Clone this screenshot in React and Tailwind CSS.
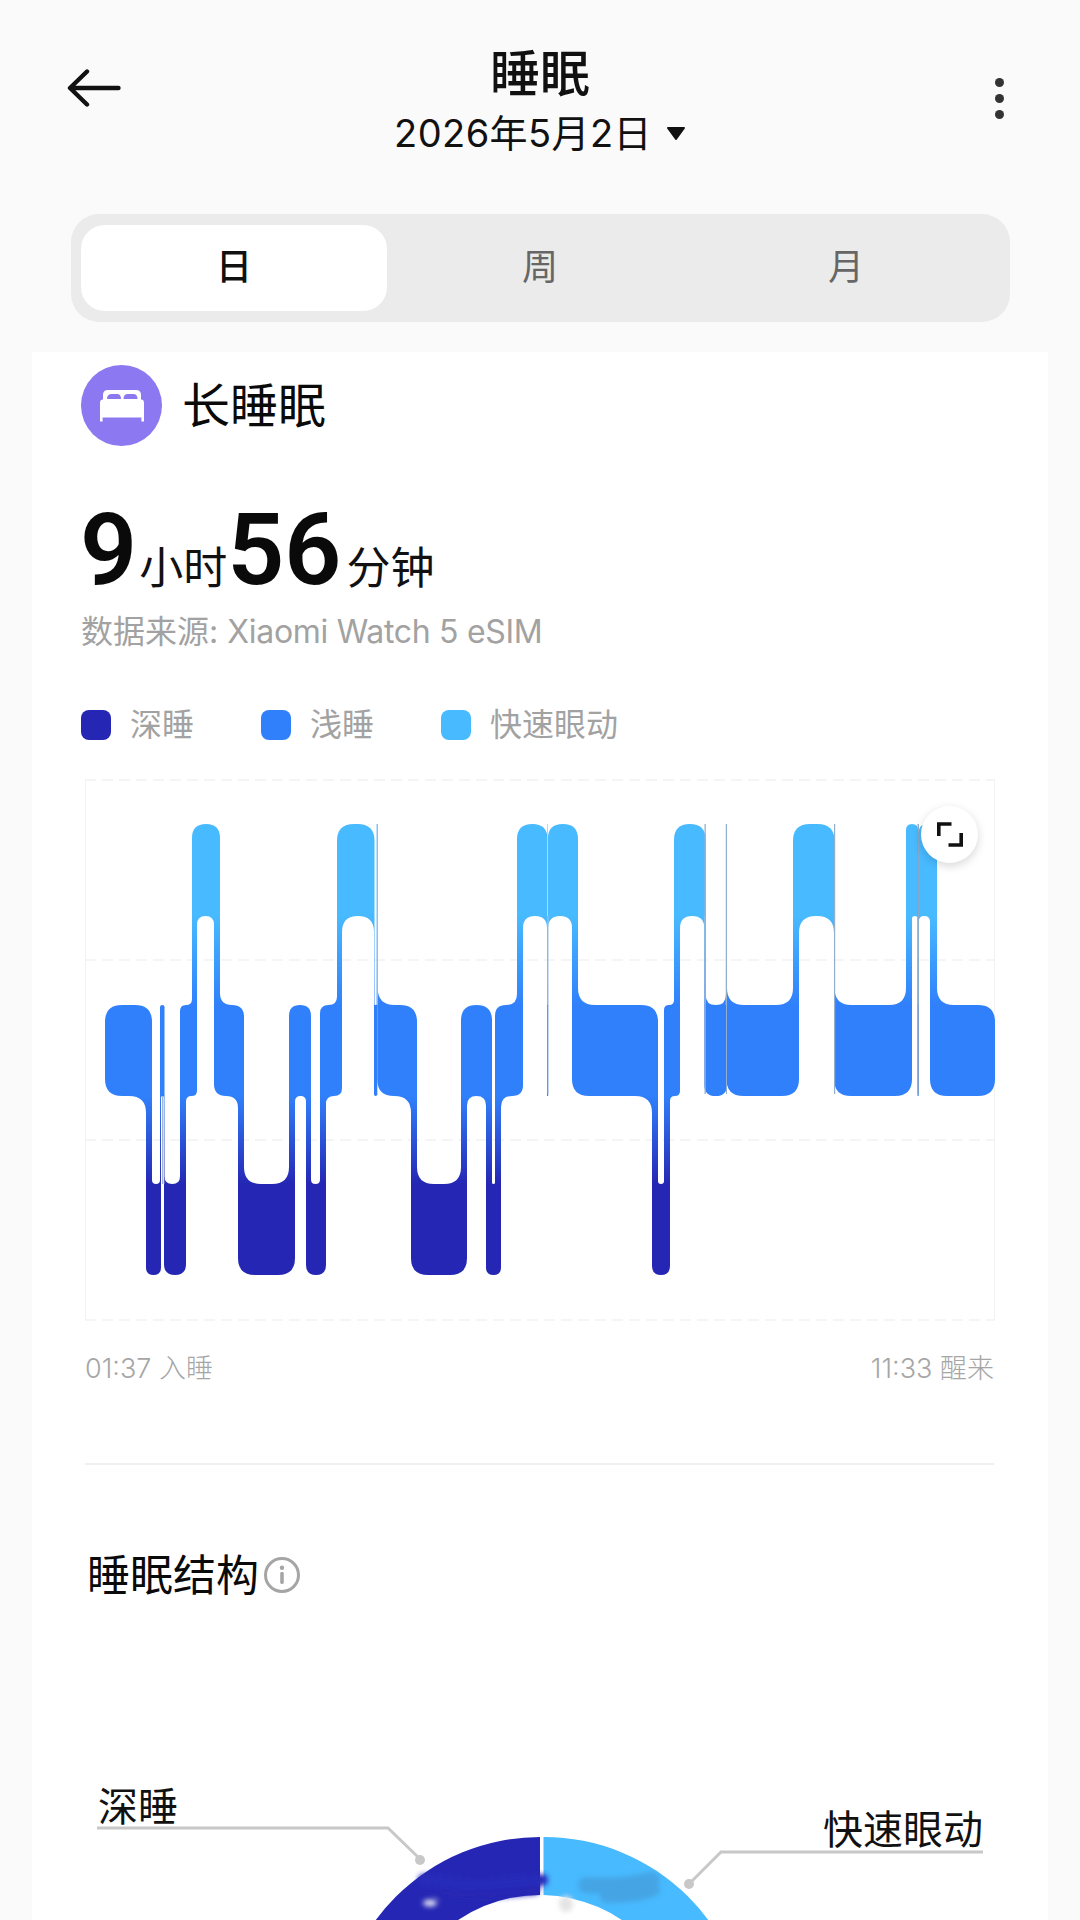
import React from "react";

const TOP = [824, 1005, 1184];
const BOT = [916, 1096, 1275];
const COL = ["#48BAFF", "#3080FB", "#2527B4"];
const R = 17;
const SEG = [
  [105, 152, 1], [146, 161, 2], [160, 164.5, 1], [164, 186, 2], [180, 197, 1], [192, 220, 0],
  [214, 244, 1], [238, 295, 2], [289, 311, 1], [306, 326, 2], [320, 342, 1], [337, 374.5, 0],
  [374, 377.3, 1], [376.7, 377.7, 0], [377.3, 417, 1], [411, 467, 2], [461, 492, 1], [486, 501, 2],
  [495, 523, 1], [517, 547.5, 0], [547, 548.2, 1], [547.8, 578, 0], [572, 658, 1], [652, 670, 2],
  [664, 680, 1], [674, 705.7, 0], [704.3, 727, 1], [725.8, 727, 0], [726.4, 799, 1], [793, 834.5, 0],
  [834, 912, 1], [906, 918, 0], [917.5, 918.7, 1], [918.5, 937, 0], [930, 995, 1],
];
const LINES = [
  [162, 1.5, 1096, 1184, "#a5b5cc"],
  [376.8, 1, 824, 1005, "#9fb8d0"],
  [547, 1, 824, 916, "#a8def8"],
  [547, 1.2, 916, 1005, "#a0b4c8"],
  [547, 1.2, 1005, 1094, "#7596c4"],
  [704.5, 1.3, 824, 1094, "#93afcb"],
  [726, 1, 824, 1094, "#93afcb"],
  [834, 1.2, 824, 1094, "#93afcb"],
  [917.6, 1.2, 824, 1094, "#7f9cc0"],
];

function gradOf(a, b) {
  return Math.min(a, b) === 0 ? "url(#g01)" : "url(#g12)";
}

function buildChart() {
  const out = [];
  SEG.forEach(([x0, x1, lv], i) => {
    const w = x1 - x0;
    const prev = SEG[i - 1];
    const next = SEG[i + 1];
    const edge = { top: { l: 0, r: 0 }, bottom: { l: 0, r: 0 } };
    if (prev && prev[2] !== lv) edge[prev[2] > lv ? "bottom" : "top"].l = Math.max(0, prev[1] - x0);
    if (next && next[2] !== lv) edge[next[2] > lv ? "bottom" : "top"].r = Math.max(0, x1 - next[0]);
    const radius = (e) => {
      const { l, r } = edge[e];
      if (!l && !r) return Math.min(R, w / 2);
      return Math.max(0, Math.min(R, (w - l - r) / 2));
    };
    const rt = radius("top");
    const rb = radius("bottom");
    const tl = edge.top.l ? 0 : rt;
    const tr = edge.top.r ? 0 : rt;
    const bl = edge.bottom.l ? 0 : rb;
    const br = edge.bottom.r ? 0 : rb;
    const t = TOP[lv];
    const b = BOT[lv];
    out.push(
      <path
        key={`b${i}`}
        fill={COL[lv]}
        d={`M${x0 + tl} ${t}H${x1 - tr}Q${x1} ${t} ${x1} ${t + tr}V${b - br}Q${x1} ${b} ${x1 - br} ${b}H${x0 + bl}Q${x0} ${b} ${x0} ${b - bl}V${t + tl}Q${x0} ${t} ${x0 + tl} ${t}Z`}
      />
    );
    const fil = (px, y, dir, vdir, r, fill, k) =>
      r > 0 && (
        <path
          key={k}
          fill={fill}
          d={`M${px + dir * r} ${y}L${px} ${y}L${px} ${y + vdir * r}Q${px} ${y} ${px + dir * r} ${y}Z`}
        />
      );
    const gTop = lv === 2 ? "url(#g12)" : "url(#g01)";
    const gBot = lv === 0 ? "url(#g01)" : "url(#g12)";
    if (edge.top.l) out.push(fil(x0 + edge.top.l, t, 1, -1, rt, gTop, `f1${i}`));
    if (edge.top.r) out.push(fil(x1 - edge.top.r, t, -1, -1, rt, gTop, `f2${i}`));
    if (edge.bottom.l) out.push(fil(x0 + edge.bottom.l, b, 1, 1, rb, gBot, `f3${i}`));
    if (edge.bottom.r) out.push(fil(x1 - edge.bottom.r, b, -1, 1, rb, gBot, `f4${i}`));
    if (next && next[2] !== lv && x1 > next[0]) {
      const up = Math.min(lv, next[2]);
      const down = Math.max(lv, next[2]);
      out.push(
        <rect
          key={`c${i}`}
          x={next[0]}
          y={BOT[up] - 0.5}
          width={x1 - next[0]}
          height={TOP[down] - BOT[up] + 1}
          fill={gradOf(up, down)}
        />
      );
    }
  });
  return out;
}

function Back() {
  return (
    <svg width="54" height="38" viewBox="0 0 54 38" fill="none" stroke="#111" strokeWidth="4.4" strokeLinecap="round" strokeLinejoin="round">
      <path d="M20 2.5 L3 19 L20 35.5 M3.5 19 H51.5" />
    </svg>
  );
}

function Bed() {
  return (
    <svg width="46" height="33" viewBox="0 0 46 33">
      <path fill="#fff" d="M4 11V6Q4 1 9 1H37Q42 1 42 6V11Z" />
      <path fill="#8C78F0" d="M8 10Q8 5 13 5H18Q22 5 22 10ZM24.5 10Q24.5 5 29 5H34Q38.5 5 38.5 10Z" />
      <path fill="#fff" d="M1 14Q1 10.6 4 10.6H42Q45 10.6 45 14V28.5H1ZM1 28H3.6V32.5H1ZM42.4 28H45V32.5H42.4Z" />
    </svg>
  );
}

function Expand() {
  return (
    <svg width="26" height="25" viewBox="0 0 26 25" fill="none" stroke="#111" strokeWidth="3.6">
      <path d="M1.8 14V2H14.5" />
      <path d="M24.2 11V23H11.5" />
    </svg>
  );
}

function Chart() {
  return (
    <div className="relative ml-[4px] w-[911px] h-[542px]">
      <svg width="911" height="542" viewBox="85 779 911 542" className="block">
        <defs>
          <linearGradient id="g01" gradientUnits="userSpaceOnUse" x1="0" x2="0" y1="916" y2="1005">
            <stop offset="0" stopColor={COL[0]} />
            <stop offset="1" stopColor={COL[1]} />
          </linearGradient>
          <linearGradient id="g12" gradientUnits="userSpaceOnUse" x1="0" x2="0" y1="1096" y2="1184">
            <stop offset="0" stopColor={COL[1]} />
            <stop offset="1" stopColor={COL[2]} />
          </linearGradient>
        </defs>
        <path d="M85.5 780V1320M994.5 780V1320" stroke="#f3f3f3" strokeWidth="1" />
        <path d="M85 780H995M85 960H995M85 1140H995M85 1320H995" stroke="#ececec" strokeWidth="1.2" strokeDasharray="11 6" />
        {buildChart()}
        {LINES.map(([x, w, a, b, c], i) => (
          <rect key={i} x={x} y={a} width={w} height={b - a} fill={c} />
        ))}
      </svg>
      <div className="absolute left-[836px] top-[27px] w-[57px] h-[57px] rounded-full bg-white shadow-[0_3px_10px_rgba(0,0,0,0.16)] flex items-center justify-center">
        <Expand />
      </div>
    </div>
  );
}

function Legend({ color, label, w }) {
  return (
    <div className={`flex items-center ${w}`}>
      <div className={`w-[30px] h-[30px] rounded-[8px] ${color}`} />
      <span className="ml-[19px] text-[32px] leading-[40px] text-[#a2a2a2]">{label}</span>
    </div>
  );
}

function Donut() {
  return (
    <div className="relative mt-[168px] -ml-[81px] w-[1080px] h-[150px] overflow-hidden">
      <svg width="1080" height="150" viewBox="0 1771 1080 150" className="block">
        <defs>
          <filter id="bl" x="-30%" y="-60%" width="160%" height="220%">
            <feGaussianBlur stdDeviation="2.4" />
          </filter>
        </defs>
        <path fill="#2527B4" d="M540 1837A204 204 0 0 0 336 2041H394A146 146 0 0 1 540 1895Z" />
        <path fill="#48BAFF" d="M543.5 1837A204 204 0 0 1 748 2041H686A146 146 0 0 0 543.5 1895Z" />
        <g filter="url(#bl)">
          <ellipse cx="566" cy="1904" rx="7" ry="8" fill="#e4e4e4" />
          <ellipse cx="430" cy="1903" rx="7" ry="3.5" fill="#dcdcee" />
          <path d="M424 1880L480 1886L542 1880" stroke="#2629b9" strokeWidth="12" fill="none" strokeLinecap="round" />
          <path d="M440 1894Q480 1896 535 1890" stroke="#2527B4" strokeWidth="9" fill="none" strokeLinecap="round" />
          <path d="M586 1885Q615 1888 652 1880" stroke="#44a4e4" strokeWidth="16" fill="none" strokeLinecap="round" />
          <path d="M606 1897Q640 1897 654 1890" stroke="#44a4e4" strokeWidth="12" fill="none" strokeLinecap="round" />
        </g>
        <path d="M97 1828H388L420 1859" fill="none" stroke="#c8c8c8" strokeWidth="3" />
        <circle cx="420" cy="1860" r="5" fill="#c8c8c8" />
        <path d="M983 1852H721L689 1884" fill="none" stroke="#c8c8c8" strokeWidth="3" />
        <circle cx="689" cy="1884" r="5" fill="#c8c8c8" />
      </svg>
      <span className="absolute left-[98px] top-[11px] text-[40px] leading-[50px] text-[#111]">深睡</span>
      <span className="absolute left-[823px] top-[33px] text-[40px] leading-[52px] text-[#111]">快速眼动</span>
    </div>
  );
}

export default function App() {
  return (
    <div className="w-[1080px] h-[1920px] overflow-hidden bg-[#fafafa] flex flex-col font-['Inter','Noto_Sans_CJK_SC',sans-serif]">
      <header className="flex h-[214px] shrink-0 items-start">
        <div className="w-[67px]" />
        <div className="w-[54px] mt-[69px]">
          <Back />
        </div>
        <div className="w-[838px] flex flex-col items-center pt-[44px]">
          <h1 className="text-[50px] leading-[60px] font-medium text-[#111]">睡眠</h1>
          <div className="flex items-center mt-[6px]">
            <span className="text-[38px] leading-[46px] tracking-[0.4px] text-[#111]">2026年5月2日</span>
            <svg width="20" height="13" viewBox="0 0 20 13" className="ml-[14px]">
              <path d="M2 1H18L10 12Z" fill="#111" stroke="#111" strokeWidth="2" strokeLinejoin="round" />
            </svg>
          </div>
        </div>
        <div className="w-[80px] mt-[78px] flex flex-col items-center gap-[7px]">
          <div className="w-[9px] h-[9px] rounded-full bg-[#333]" />
          <div className="w-[9px] h-[9px] rounded-full bg-[#333]" />
          <div className="w-[9px] h-[9px] rounded-full bg-[#333]" />
        </div>
      </header>

      <div className="ml-[71px] w-[939px] h-[108px] shrink-0 rounded-[28px] bg-[#ebebeb] flex items-center pl-[10px]">
        <div className="w-[306px] h-[86px] rounded-[24px] bg-white flex items-center justify-center text-[36px] leading-[44px] pb-[2px] font-medium text-[#111]">日</div>
        <div className="w-[306px] flex items-center justify-center text-[36px] leading-[44px] pb-[2px] text-[#666]">周</div>
        <div className="w-[306px] flex items-center justify-center text-[36px] leading-[44px] pb-[2px] text-[#666]">月</div>
      </div>

      <main className="mt-[30px] ml-[32px] w-[1016px] flex-1 bg-white pl-[49px]">
        <div className="flex items-center pt-[13px] h-[94px]">
          <div className="w-[81px] h-[81px] rounded-full bg-[#8C78F0] flex items-center justify-center">
            <Bed />
          </div>
          <span className="ml-[20px] text-[48px] leading-[60px] font-normal text-[#0a0a0a]">长睡眠</span>
        </div>
        <div className="flex items-baseline h-[100px] mt-[54px] font-['Roboto','Noto_Sans_CJK_SC',sans-serif]">
          <span className="text-[100px] leading-[100px] font-semibold text-[#0a0a0a] ml-[-1px]">9</span>
          <span className="ml-[2px] text-[44px] text-[#111] font-['Noto_Sans_CJK_SC',sans-serif]">小时</span>
          <span className="text-[100px] leading-[100px] font-semibold text-[#0a0a0a]">56</span>
          <span className="ml-[5px] text-[44px] text-[#111] font-['Noto_Sans_CJK_SC',sans-serif]">分钟</span>
        </div>
        <div className="mt-[10px] text-[32px] leading-[44px] text-[#a2a2a2]">
          数据来源: <span className="tracking-[-0.3px]">Xiaomi Watch 5 eSIM</span>
        </div>
        <div className="flex items-center mt-[51px] h-[40px]">
          <Legend color="bg-[#2527B4]" label="深睡" w="w-[180px]" />
          <Legend color="bg-[#3080FB]" label="浅睡" w="w-[180px]" />
          <Legend color="bg-[#48BAFF]" label="快速眼动" w="w-[260px]" />
        </div>
        <div className="mt-[34px]">
          <Chart />
        </div>
        <div className="ml-[4px] w-[909px] mt-[30px] flex justify-between text-[27px] leading-[36px] text-[#a6a6a6] font-light">
          <span>01:37 入睡</span>
          <span>11:33 醒来</span>
        </div>
        <div className="ml-[4px] w-[909px] h-[2px] bg-[#f0f0f0] mt-[76px]" />
        <div className="ml-[6px] mt-[82px] flex items-center h-[56px]">
          <span className="text-[43px] leading-[56px] font-normal text-[#0a0a0a]">睡眠结构</span>
          <svg width="36" height="36" viewBox="0 0 36 36" className="ml-[5px]" fill="none">
            <circle cx="18" cy="18" r="16.5" stroke="#a5a5a5" strokeWidth="3" />
            <circle cx="18" cy="10.8" r="2.2" fill="#a5a5a5" />
            <rect x="16.2" y="15" width="3.6" height="12" rx="1.4" fill="#a5a5a5" />
          </svg>
        </div>
        <Donut />
      </main>
    </div>
  );
}
